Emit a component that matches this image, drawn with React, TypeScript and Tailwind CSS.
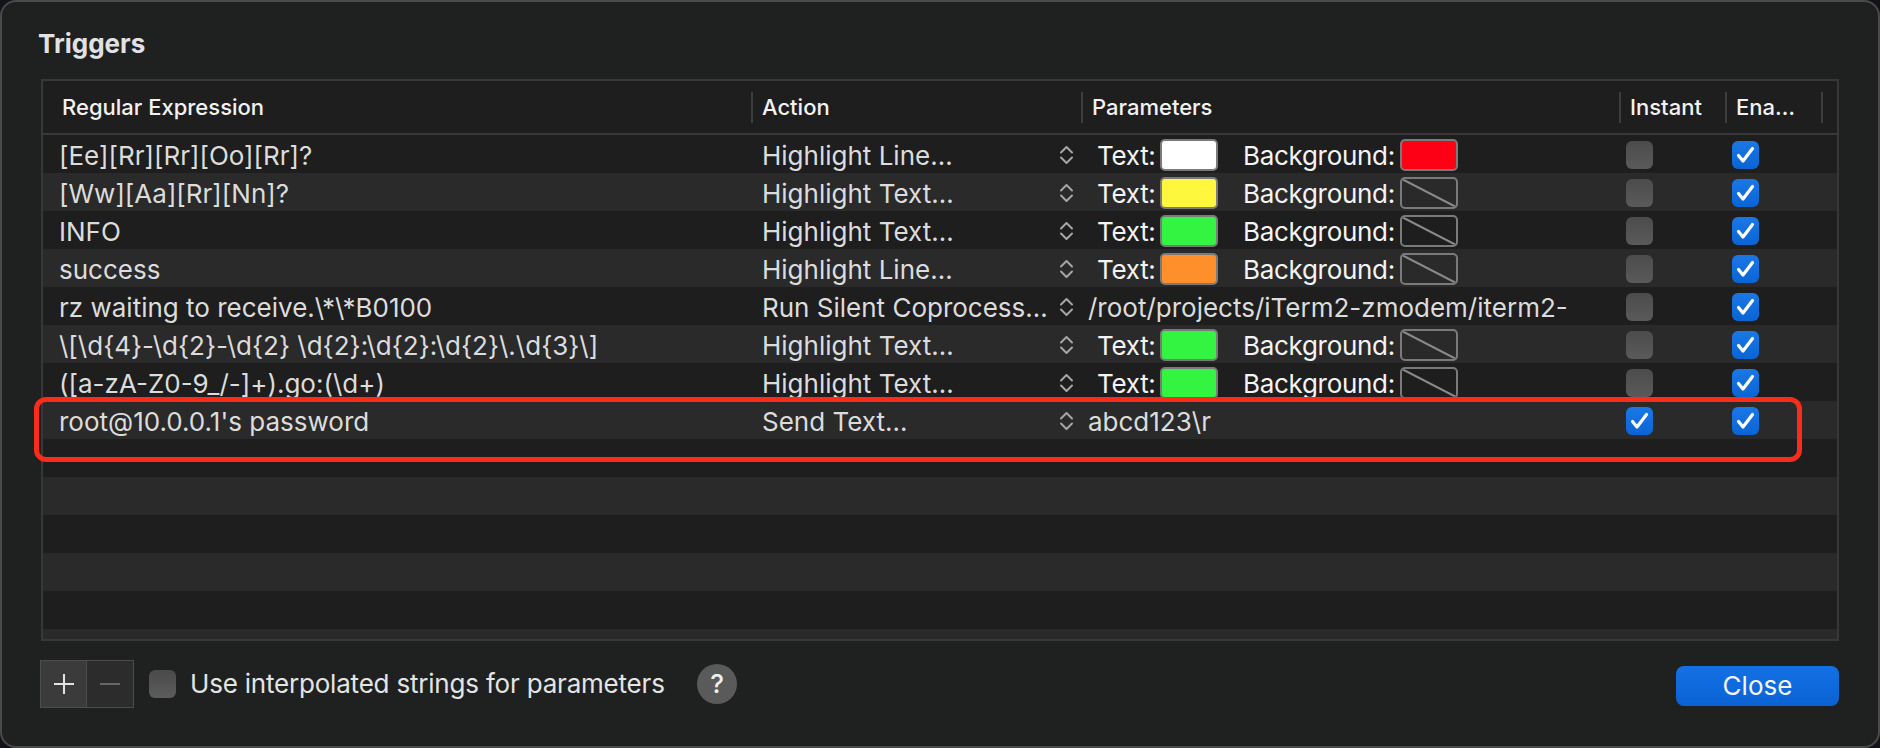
import React from 'react';

type Row = {
    expr: string;
    action: string;
    textColor?: string;
    bgColor?: string;
    param?: string;
    instant?: boolean;
};

const rows: Row[] = [
    { expr: '[Ee][Rr][Rr][Oo][Rr]?', action: 'Highlight Line…', textColor: 'bg-[#ffffff]', bgColor: 'bg-[#fe0016]' },
    { expr: '[Ww][Aa][Rr][Nn]?', action: 'Highlight Text…', textColor: 'bg-[#fff63e]' },
    { expr: 'INFO', action: 'Highlight Text…', textColor: 'bg-[#33f541]' },
    { expr: 'success', action: 'Highlight Line…', textColor: 'bg-[#fe8f2b]' },
    { expr: 'rz waiting to receive.\\*\\*B0100', action: 'Run Silent Coprocess…', param: '/root/projects/iTerm2-zmodem/iterm2-' },
    { expr: '\\[\\d{4}-\\d{2}-\\d{2} \\d{2}:\\d{2}:\\d{2}\\.\\d{3}\\]', action: 'Highlight Text…', textColor: 'bg-[#33f541]' },
    { expr: '([a-zA-Z0-9_/-]+).go:(\\d+)', action: 'Highlight Text…', textColor: 'bg-[#33f541]' },
    { expr: "root@10.0.0.1's password", action: 'Send Text…', param: 'abcd123\\r', instant: true }
];

const cols = 'grid grid-cols-[708px_330px_538px_106px_96px_1fr]';

function Stepper() {
    return (
        <svg width="15" height="22" viewBox="0 0 15 22" fill="none" stroke="#a6a6a6" strokeWidth="2" strokeLinecap="round" strokeLinejoin="round">
            <path d="M2 8.5 L7.5 3 L13 8.5" />
            <path d="M2 13.5 L7.5 19 L13 13.5" />
        </svg>
    );
}

function Swatch({ color }: { color?: string }) {
    return (
        <div className={`relative mt-[2px] h-[32px] w-[58px] shrink-0 overflow-hidden rounded-[5px] border-2 border-[#7a7a7a] ${color ?? ''}`}>
            {!color && (
                <svg className="absolute inset-0" width="54" height="28" viewBox="0 0 54 28">
                    <line x1="0" y1="0" x2="54" y2="28" stroke="#8a8a8a" strokeWidth="2" />
                </svg>
            )}
        </div>
    );
}

function Check({ on }: { on?: boolean }) {
    if (on) {
        return (
            <div className="mt-[2px] flex h-[28px] w-[27px] items-center justify-center rounded-[6px] bg-linear-to-b from-[#1a78e6] to-[#0a64d4]">
                <svg width="27" height="28" viewBox="0 0 27 28" fill="none">
                    <path d="M6.5 14.5 L11 20 L20.5 7.5" stroke="white" strokeWidth="3.2" strokeLinecap="round" strokeLinejoin="round" />
                </svg>
            </div>
        );
    }
    return <div className="mt-[2px] h-[28px] w-[27px] rounded-[6px] bg-linear-to-b from-[#4c4c4c] to-[#5a5a5a]" />;
}

function HeaderCell({ label, first }: { label: string; first?: boolean }) {
    return (
        <div className="flex items-center">
            {!first && <div className="h-[31px] w-[2px] bg-[#3d3d3d]" />}
            <span className={first ? 'pl-[19px]' : 'pl-[9px]'}>{label}</span>
        </div>
    );
}

export default function App() {
    const filler = Array.from({ length: 6 });

    return (
        <div className="relative h-[748px] w-[1880px] bg-[#15131a] font-['Inter',sans-serif]">
            <div className="flex h-full w-full flex-col overflow-hidden rounded-[16px] border-2 border-[#4a4a4a] bg-[#1f2020]">
                <div className="h-[77px] shrink-0 pl-[36px] pt-[26px] text-[26px] font-bold leading-[32px] text-[#e2e2e2]">
                    Triggers
                </div>

                <div className="mx-[39px] flex h-[562px] shrink-0 flex-col overflow-hidden border-2 border-[#383838] bg-[#1e1e1e]">
                    <div className={`${cols} h-[54px] shrink-0 border-b-2 border-[#383838] text-[22px] font-medium text-[#f2f2f2]`}>
                        <HeaderCell label="Regular Expression" first />
                        <HeaderCell label="Action" />
                        <HeaderCell label="Parameters" />
                        <HeaderCell label="Instant" />
                        <HeaderCell label="Ena…" />
                        <div className="flex items-center">
                            <div className="h-[31px] w-[2px] bg-[#3d3d3d]" />
                        </div>
                    </div>

                    <div className="flex-1 overflow-hidden text-[26px] leading-[32px] text-[#dcdcdc]">
                        {rows.map((row, i) => (
                            <div key={i} className={`${cols} h-[38px] ${i % 2 === 0 ? 'bg-[#1e1e1e]' : 'bg-[#2a2a2a]'}`}>
                                <div className="flex items-center overflow-hidden pl-[16px]">
                                    <span className="whitespace-nowrap pt-[4px]">{row.expr}</span>
                                </div>
                                <div className="flex items-center pl-[11px] pr-[7px]">
                                    <span className="flex-1 truncate pt-[4px]">{row.action}</span>
                                    <div className="mt-[2px]">
                                        <Stepper />
                                    </div>
                                </div>
                                {row.param ? (
                                    <div className="flex items-center overflow-hidden pl-[7px]">
                                        <span className="whitespace-nowrap pt-[4px]">{row.param}</span>
                                    </div>
                                ) : (
                                    <div className="flex items-center pl-[16px] text-[#f4f4f4] tracking-[-0.3px]">
                                        <span className="w-[63px] shrink-0 pt-[4px]">Text:</span>
                                        <Swatch color={row.textColor} />
                                        <span className="ml-[25px] w-[157px] shrink-0 whitespace-nowrap pt-[4px]">Background:</span>
                                        <Swatch color={row.bgColor} />
                                    </div>
                                )}
                                <div className="flex items-center pl-[7px]">
                                    <Check on={row.instant} />
                                </div>
                                <div className="flex items-center pl-[7px]">
                                    <Check on />
                                </div>
                                <div />
                            </div>
                        ))}
                        {filler.map((_, i) => (
                            <div key={i} className={`h-[38px] ${(rows.length + i) % 2 === 0 ? 'bg-[#1e1e1e]' : 'bg-[#2a2a2a]'}`} />
                        ))}
                    </div>
                </div>

                <div className="mt-[19px] flex h-[48px] shrink-0 items-center pl-[38px] pr-[39px] text-[26px] leading-[32px]">
                    <div className="flex h-[48px] border border-[#4c4c4c]">
                        <div className="flex w-[46px] items-center justify-center border-r border-[#4c4c4c] bg-[#3b3b3b]">
                            <svg width="22" height="22" viewBox="0 0 22 22" stroke="#e2e2e2" strokeWidth="2">
                                <line x1="11" y1="1" x2="11" y2="21" />
                                <line x1="1" y1="11" x2="21" y2="11" />
                            </svg>
                        </div>
                        <div className="flex w-[46px] items-center justify-center bg-[#2c2c2c]">
                            <div className="h-[2px] w-[20px] bg-[#666666]" />
                        </div>
                    </div>
                    <div className="ml-[15px] h-[28px] w-[27px] rounded-[6px] bg-linear-to-b from-[#4a4a4a] to-[#5c5c5c]" />
                    <span className="ml-[14px] w-[507px] tracking-[-0.2px] text-[#e4e4e4]">Use interpolated strings for parameters</span>
                    <div className="flex h-[40px] w-[40px] items-center justify-center rounded-full bg-[#5a5a5a] font-medium text-[#f0f0f0]">
                        ?
                    </div>
                    <button className="ml-auto mt-[4px] flex h-[40px] w-[163px] items-center justify-center rounded-[8px] bg-linear-to-b from-[#1471e4] to-[#0a63d5] text-[#f4f6ff]">
                        Close
                    </button>
                </div>
            </div>

            <div className="absolute left-[34px] top-[397px] h-[65px] w-[1768px] rounded-[12px] border-[5px] border-[#fb2c1c]" />
        </div>
    );
}
